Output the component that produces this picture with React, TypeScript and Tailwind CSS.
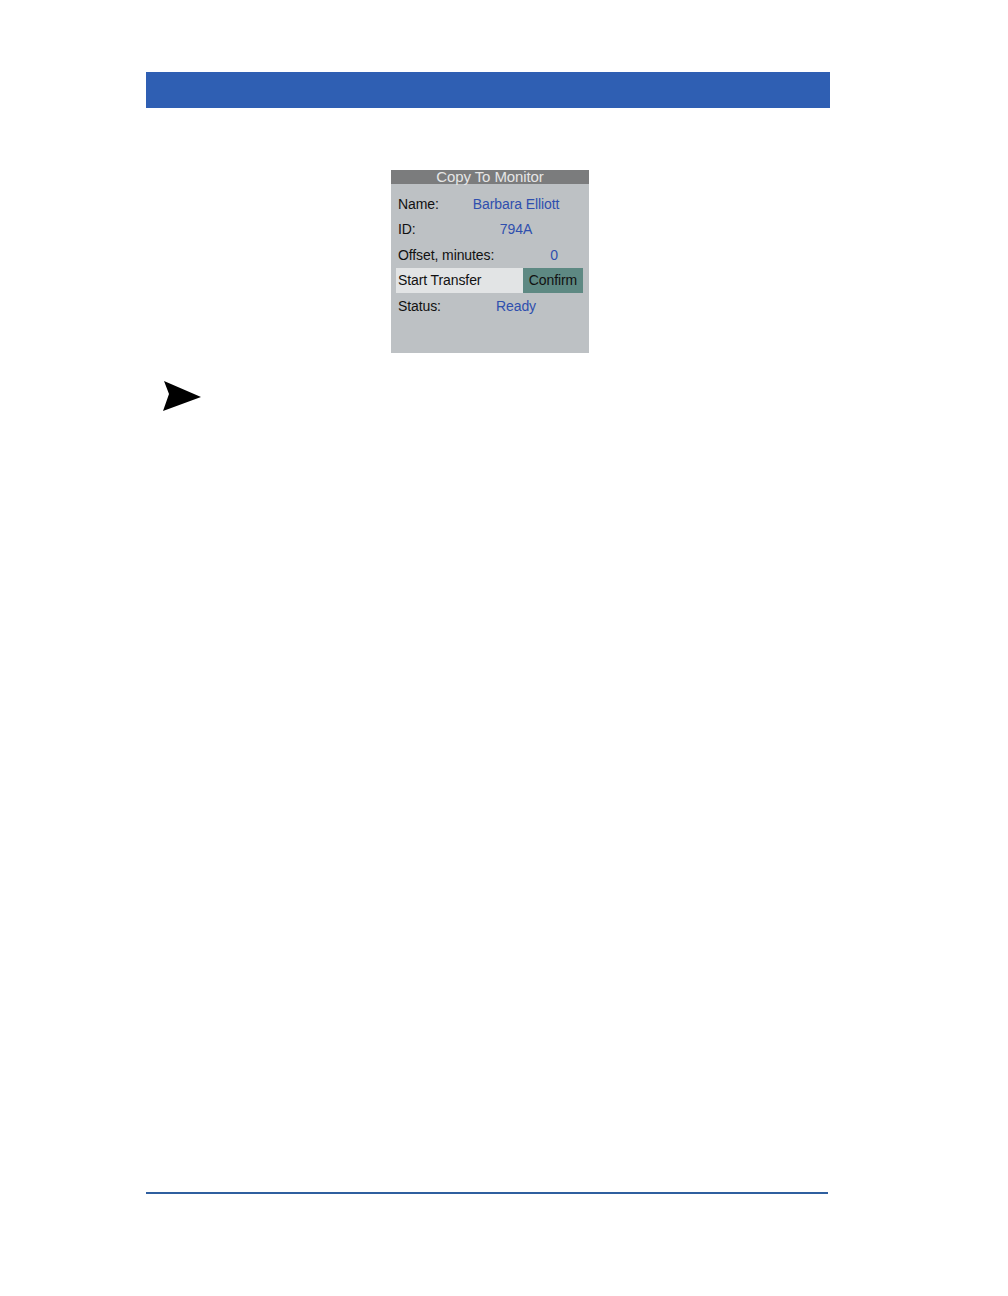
const BLUE_TEXT = "text-[#2f4fae]";

function InfoRow({ label, value }: { label: string; value: string }) {
  return (
    <div className="flex h-[25.5px] items-center pl-[7px]">
      <span className="w-[64px]">{label}</span>
      <span className={`w-[108px] text-center ${BLUE_TEXT}`}>{value}</span>
    </div>
  );
}

function CopyToMonitor() {
  return (
    <div className="ml-[245px] mt-[62px] flex h-[183px] w-[198px] flex-col bg-[#bdc1c4] text-[14px] leading-none tracking-[-0.1px] text-[#111]">
      <div className="flex h-[14px] items-center justify-center bg-[#7b7c7d] pb-[2px] text-[15px] text-[#e6e6e6]">
        Copy To Monitor
      </div>
      <div className="flex flex-col pt-[7px]">
        <InfoRow label="Name:" value="Barbara Elliott" />
        <InfoRow label="ID:" value="794A" />
        <div className="flex h-[25.5px] items-center pl-[7px] pr-[25px]">
          <span className="flex-1">Offset, minutes:</span>
          <span className={`w-[20px] text-center ${BLUE_TEXT}`}>0</span>
        </div>
        <div className="flex h-[25.5px] items-stretch pl-[5px] pr-[6px]">
          <div className="flex flex-1 items-center bg-[#e2e4e5] pl-[2px]">Start Transfer</div>
          <div className="flex w-[60px] items-center justify-center bg-[#5e8983]">Confirm</div>
        </div>
        <InfoRow label="Status:" value="Ready" />
      </div>
    </div>
  );
}

export default function App() {
  return (
    <div className="flex h-[1296px] w-[1008px] flex-col bg-white pl-[146px] pt-[72px] font-['Liberation_Sans',Arial,sans-serif]">
      <div className="h-[36px] w-[684px] bg-[#2f5fb3]" />
      <CopyToMonitor />
      <svg className="ml-[14px] mt-[25px] shrink-0" width="46" height="36" viewBox="0 0 46 36">
        <polygon points="4,3 41,19 3,33 9,16" fill="#000" />
      </svg>
      <div className="mt-[778px] h-[2px] w-[682px] bg-[#2f5f9f]" />
    </div>
  );
}
